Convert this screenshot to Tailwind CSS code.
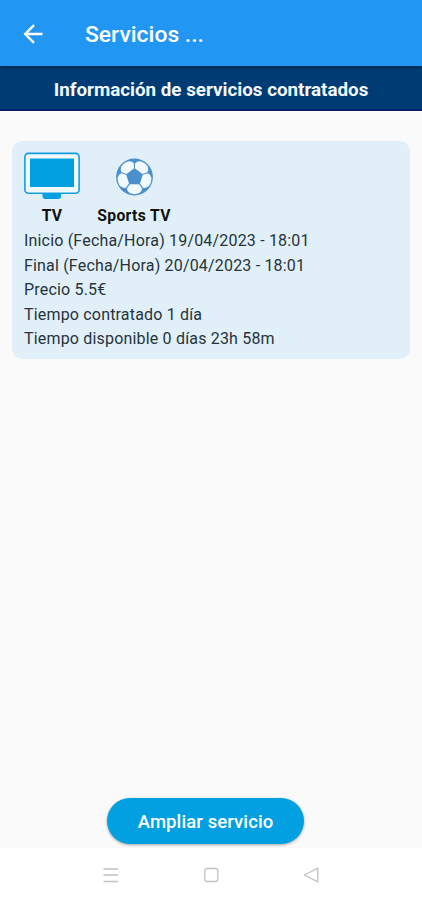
<!DOCTYPE html>
<html lang="es">
<head>
  <meta charset="UTF-8" />
  <meta name="viewport" content="width=device-width, initial-scale=1.0"/>
  <title>Servicios contratados</title>
  <script src="https://cdn.jsdelivr.net/npm/@tailwindcss/browser@4"></script>
</head>
<body class="bg-[#fafafa] font-[Roboto,sans-serif] text-[#26333b]">

  <div class="flex h-[900px] w-[422px] flex-col overflow-hidden">
    <!-- App bar -->
    <header class="relative z-10 flex h-[66px] shrink-0 items-center bg-[#2196f3] pl-[23px] pt-px text-white shadow-[0_1px_4px_rgba(0,0,0,0.5)]">
      <svg class="h-5 w-5" viewBox="0 0 20 20" fill="none" stroke="currentColor" stroke-width="2.4">
        <path d="M19.5 10H2.5M11 1.2 2.2 10l8.8 8.8"/>
      </svg>
      <h1 class="ml-[42px] pt-[3px] text-[22.9px] font-medium">Servicios ...</h1>
    </header>

    <div class="flex h-[45px] shrink-0 items-center justify-center border-b-2 border-[#002068] bg-[#003c74] pt-[5px] text-[18.8px] font-bold text-[#f4f8ff]">
      Información de servicios contratados
    </div>

    <main class="flex flex-1 flex-col px-3 pt-[30px]">
      <!-- Service card -->
      <section class="h-[218px] rounded-[10px] bg-[#e1f0f8] px-3 pt-[11px]">
        <div class="flex">
          <div class="flex w-14 flex-col items-center">
            <svg class="h-[50px] w-14" viewBox="0 0 56 50">
              <rect x="0.9" y="1.4" width="54.2" height="39.9" rx="3.5" fill="#f0fafd" stroke="#139ddb" stroke-width="1.6"/>
              <rect x="6" y="6.5" width="44" height="28.5" fill="#029fe1"/>
              <path d="M18.5 41.5h18.5v2.5q0 3-3 3H21.5q-3 0-3-3z" fill="#029fe1"/>
            </svg>
            <span class="mt-[5px] text-[15.7px] leading-[18px] font-bold text-[#111] tracking-[0.3px]">TV</span>
          </div>
          <div class="ml-[16px] flex w-[76px] flex-col items-center">
            <svg class="h-[50px] w-10" viewBox="0 0 40 50">
              <g transform="translate(20.5 25)">
                <circle r="18.4" fill="#4a8fce"/>
                <g fill="#f2fafd">
                  <path id="panel" transform="rotate(36)" d="M-4.6-7.2H4.6L7.6-11.5Q7.6-14 4.8-16.1 0-18.3-4.8-16.1-7.6-14-7.6-11.5z"/>
                  <use href="#panel" transform="rotate(72)"/>
                  <use href="#panel" transform="rotate(144)"/>
                  <use href="#panel" transform="rotate(216)"/>
                  <use href="#panel" transform="rotate(288)"/>
                </g>
              </g>
            </svg>
            <span class="mt-[5px] text-[15.7px] leading-[18px] font-bold whitespace-nowrap text-[#111] tracking-[0.35px]">Sports TV</span>
          </div>
        </div>
        <div class="mt-[4px] text-[16px] leading-[24.6px] tracking-[0.18px]">
          <p>Inicio (Fecha/Hora) 19/04/2023 - 18:01</p>
          <p>Final (Fecha/Hora) 20/04/2023 - 18:01</p>
          <p>Precio 5.5€</p>
          <p>Tiempo contratado 1 día</p>
          <p>Tiempo disponible 0 días 23h 58m</p>
        </div>
      </section>

      <button class="mt-auto mb-[4px] ml-[95px] h-[46px] w-[197px] rounded-full bg-[#029fe1] pt-[3px] text-[18.5px] font-medium tracking-[0.1px] text-white shadow-[0_1px_3px_rgba(0,0,0,0.35)]">Ampliar servicio</button>
    </main>

    <!-- System navigation -->
    <nav class="flex h-[52px] shrink-0 items-center bg-white pt-[2px] pl-[103px] text-[#c2c2c2]">
      <svg class="h-4 w-4" viewBox="0 0 16 16" fill="none" stroke="currentColor" stroke-width="1.3">
        <path d="M0.5 2h14.5M0.5 8h14.5M0.5 14.5h14.5"/>
      </svg>
      <svg class="ml-[84px] h-4 w-4" viewBox="0 0 16 16" fill="none" stroke="currentColor" stroke-width="1.3">
        <rect x="1.8" y="1.5" width="13" height="13" rx="2.5"/>
      </svg>
      <svg class="ml-[84px] h-4 w-4" viewBox="0 0 16 16" fill="none" stroke="currentColor" stroke-width="1.3" stroke-linejoin="round">
        <path d="M14.8 1.2v13.6L1.4 8z"/>
      </svg>
    </nav>
  </div>

</body>
</html>
